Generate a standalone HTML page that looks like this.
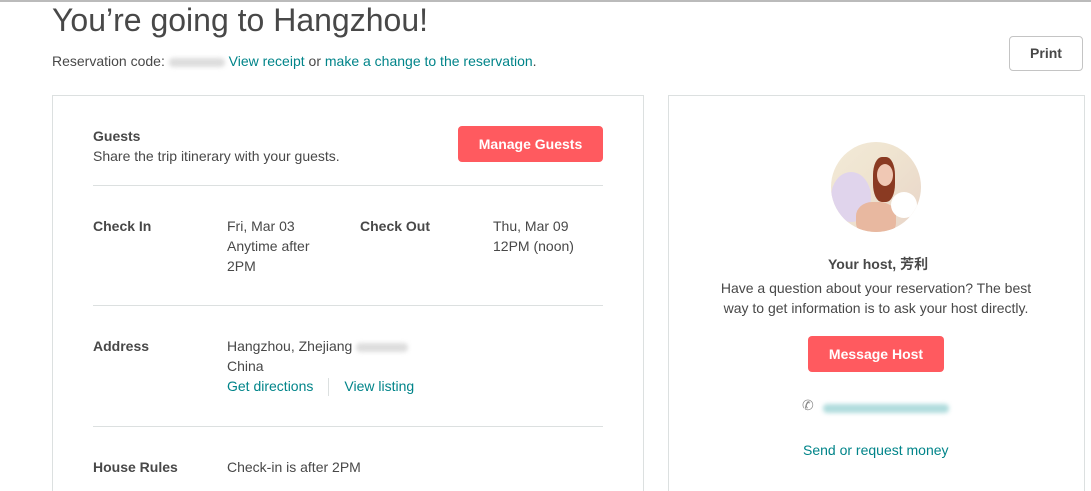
<!DOCTYPE html>
<html><head><meta charset="utf-8"><style>
html,body{margin:0;width:1091px;height:491px;overflow:hidden}
body{background:#fff;font-family:"Liberation Sans","Noto Sans CJK SC",sans-serif;color:#484848;font-size:14px;position:relative}
.a{position:absolute;white-space:nowrap}
.t{color:#008489}
.b{font-weight:bold}
.line{position:absolute;height:1px;background:#dce0e0}
.btn{position:absolute;background:#ff5a5f;color:#fff;font-weight:bold;border-radius:4px;text-align:center}
.blur{display:inline-block;vertical-align:middle;height:9px;border-radius:4px;filter:blur(2px)}
</style></head><body>
<div style="position:absolute;left:0;top:0;width:1091px;height:2px;background:#bbb"></div>
<div class="a" style="left:52px;top:0px;font-size:32px;line-height:40px">You’re going to Hangzhou!</div>
<div class="a" style="left:52px;top:53px;font-size:14px;line-height:16px">Reservation code: <span class="blur" style="width:56px;background:#ddd"></span> <span class="t">View receipt</span> or <span class="t">make a change to the reservation</span>.</div>
<div style="position:absolute;left:1009px;top:36px;width:72px;height:33px;border:1px solid #c4c4c4;border-radius:4px;text-align:center;line-height:33px;font-weight:bold">Print</div>
<div style="position:absolute;left:52px;top:95px;width:590px;height:396px;border:1px solid #dce0e0;border-bottom:none"></div>
<div style="position:absolute;left:668px;top:95px;width:415px;height:396px;border:1px solid #dce0e0;border-bottom:none"></div>
<div class="a b" style="left:93px;top:128px">Guests</div>
<div class="a" style="left:93px;top:148px">Share the trip itinerary with your guests.</div>
<div class="btn" style="left:458px;top:126px;width:145px;height:36px;line-height:36px">Manage Guests</div>
<div class="line" style="left:93px;top:185px;width:510px"></div>
<div class="a b" style="left:93px;top:218px">Check In</div>
<div class="a" style="left:227px;top:216px;line-height:20px">Fri, Mar 03<br>Anytime after<br>2PM</div>
<div class="a b" style="left:360px;top:218px">Check Out</div>
<div class="a" style="left:493px;top:216px;line-height:20px">Thu, Mar 09<br>12PM (noon)</div>
<div class="line" style="left:93px;top:305px;width:510px"></div>
<div class="a b" style="left:93px;top:338px">Address</div>
<div class="a" style="left:227px;top:336px;line-height:20px">Hangzhou, Zhejiang <span class="blur" style="width:52px;background:#ddd"></span><br>China<br><span class="t">Get directions</span><span style="display:inline-block;width:1px;height:18px;background:#dce0e0;margin:0 15px;vertical-align:middle"></span><span class="t">View listing</span></div>
<div class="line" style="left:93px;top:426px;width:510px"></div>
<div class="a b" style="left:93px;top:459px">House Rules</div>
<div class="a" style="left:227px;top:459px">Check-in is after 2PM</div>
<div style="position:absolute;left:831px;top:142px;width:90px;height:90px;border-radius:50%;overflow:hidden;background:linear-gradient(135deg,#f3ead8 0%,#efe4d0 40%,#e8d4c8 100%)">
<div style="position:absolute;left:0;top:30px;width:40px;height:50px;background:#e0d4ec;border-radius:50%"></div>
<div style="position:absolute;left:42px;top:15px;width:22px;height:45px;background:#8a3a22;border-radius:40%"></div>
<div style="position:absolute;left:46px;top:22px;width:16px;height:22px;background:#f0c8b4;border-radius:50%"></div>
<div style="position:absolute;left:25px;top:60px;width:40px;height:35px;background:#e8b8a0;border-radius:40%"></div>
<div style="position:absolute;left:60px;top:50px;width:26px;height:26px;background:#fff;border-radius:50%"></div>
</div>
<div class="a b" style="left:828px;top:254px">Your host, 芳利</div>
<div class="a" style="left:668px;width:416px;text-align:center;top:278px;line-height:20px">Have a question about your reservation? The best<br>way to get information is to ask your host directly.</div>
<div class="btn" style="left:808px;top:336px;width:136px;height:36px;line-height:36px">Message Host</div>
<div class="a" style="left:802px;top:397px;color:#888;font-size:14px">✆</div>
<div class="a" style="left:823px;top:399px"><span class="blur" style="width:126px;background:#b0dcdd"></span></div>
<div class="a t" style="left:803px;top:442px">Send or request money</div>
</body></html>
